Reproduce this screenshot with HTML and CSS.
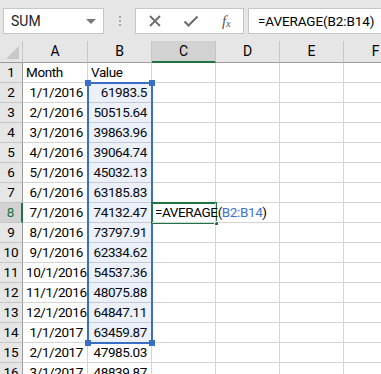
FILE: index.html
```html
<!DOCTYPE html>
<html lang="en">
<head>
    <meta charset="UTF-8">
    <title>Sheet</title>
    <link rel="stylesheet" href="styles.css">
</head>
<body>
    <div class="toolbar">
        <div class="name-box">
            <span>SUM</span>
            <span class="caret"></span>
        </div>
        <div class="grip"><i></i><i></i><i></i></div>
        <div class="buttons">
            <svg width="14" height="14" viewBox="0 0 14 14"><path d="M2 2 L12 12 M12 2 L2 12" stroke="#6b6b6b" stroke-width="1.8" fill="none"/></svg>
            <svg width="16" height="14" viewBox="0 0 16 14"><path d="M1.5 7.5 L5.5 11.5 L14.5 2.5" stroke="#6b6b6b" stroke-width="2" fill="none"/></svg>
            <span class="fx"><i>f</i><sub>x</sub></span>
        </div>
        <div class="formula">=AVERAGE(B2:B14)</div>
    </div>

    <div class="sheet">
        <div class="grid">
            <div class="corner"><span class="tri"></span></div>
            <div class="colhead">A</div>
            <div class="colhead">B</div>
            <div class="colhead active">C</div>
            <div class="colhead">D</div>
            <div class="colhead">E</div>
            <div class="colhead">F</div>

            <div class="rowhead">1</div><div class="cell">Month</div><div class="cell">Value</div><div class="cell"></div><div class="cell"></div><div class="cell"></div><div class="cell"></div>
            <div class="rowhead">2</div><div class="cell num">1/1/2016</div><div class="cell num">61983.5</div><div class="cell"></div><div class="cell"></div><div class="cell"></div><div class="cell"></div>
            <div class="rowhead">3</div><div class="cell num">2/1/2016</div><div class="cell num">50515.64</div><div class="cell"></div><div class="cell"></div><div class="cell"></div><div class="cell"></div>
            <div class="rowhead">4</div><div class="cell num">3/1/2016</div><div class="cell num">39863.96</div><div class="cell"></div><div class="cell"></div><div class="cell"></div><div class="cell"></div>
            <div class="rowhead">5</div><div class="cell num">4/1/2016</div><div class="cell num">39064.74</div><div class="cell"></div><div class="cell"></div><div class="cell"></div><div class="cell"></div>
            <div class="rowhead">6</div><div class="cell num">5/1/2016</div><div class="cell num">45032.13</div><div class="cell"></div><div class="cell"></div><div class="cell"></div><div class="cell"></div>
            <div class="rowhead">7</div><div class="cell num">6/1/2016</div><div class="cell num">63185.83</div><div class="cell"></div><div class="cell"></div><div class="cell"></div><div class="cell"></div>
            <div class="rowhead active">8</div><div class="cell num">7/1/2016</div><div class="cell num">74132.47</div><div class="cell edit">=AVERAGE(<span class="ref">B2:B14</span>)</div><div class="cell"></div><div class="cell"></div><div class="cell"></div>
            <div class="rowhead">9</div><div class="cell num">8/1/2016</div><div class="cell num">73797.91</div><div class="cell"></div><div class="cell"></div><div class="cell"></div><div class="cell"></div>
            <div class="rowhead">10</div><div class="cell num">9/1/2016</div><div class="cell num">62334.62</div><div class="cell"></div><div class="cell"></div><div class="cell"></div><div class="cell"></div>
            <div class="rowhead">11</div><div class="cell num">10/1/2016</div><div class="cell num">54537.36</div><div class="cell"></div><div class="cell"></div><div class="cell"></div><div class="cell"></div>
            <div class="rowhead">12</div><div class="cell num">11/1/2016</div><div class="cell num">48075.88</div><div class="cell"></div><div class="cell"></div><div class="cell"></div><div class="cell"></div>
            <div class="rowhead">13</div><div class="cell num">12/1/2016</div><div class="cell num">64847.11</div><div class="cell"></div><div class="cell"></div><div class="cell"></div><div class="cell"></div>
            <div class="rowhead">14</div><div class="cell num">1/1/2017</div><div class="cell num">63459.87</div><div class="cell"></div><div class="cell"></div><div class="cell"></div><div class="cell"></div>
            <div class="rowhead">15</div><div class="cell num">2/1/2017</div><div class="cell num">47985.03</div><div class="cell"></div><div class="cell"></div><div class="cell"></div><div class="cell"></div>
            <div class="rowhead">16</div><div class="cell num">3/1/2017</div><div class="cell num">48839.87</div><div class="cell"></div><div class="cell"></div><div class="cell"></div><div class="cell"></div>
        </div>

        <!-- overlays -->
        <div class="range">
            <span class="h tl"></span><span class="h tr"></span>
            <span class="h bl"></span><span class="h br"></span>
        </div>
        <div class="active-cell"><span class="fill"></span></div>
    </div>
</body>
</html>
```

FILE: styles.css
```css
* {
    margin: 0;
    padding: 0;
    box-sizing: border-box;
}

body {
    background: #e6e6e6;
    font-family: Roboto, "Liberation Sans", sans-serif;
    font-size: 13px;
    color: #000;
    overflow: hidden;
    width: 381px;
    height: 374px;
}

.toolbar {
    height: 41px;
    display: flex;
    align-items: flex-start;
    padding-top: 8px;
    padding-left: 3px;
}

.name-box {
    width: 101px;
    height: 26px;
    background: #fff;
    border: 1px solid #c6c6c6;
    display: flex;
    align-items: center;
    justify-content: space-between;
    padding: 0 7px 0 7px;
    font-size: 14px;
    color: #222;
}

.caret {
    width: 0;
    height: 0;
    border-left: 5px solid transparent;
    border-right: 5px solid transparent;
    border-top: 5px solid #7a7a7a;
}

.grip {
    width: 31px;
    height: 26px;
    display: flex;
    flex-direction: column;
    align-items: center;
    justify-content: center;
    gap: 2px;
}

.grip i {
    width: 2px;
    height: 2px;
    background: #a8a8a8;
}

.buttons {
    width: 109px;
    height: 26px;
    background: #fff;
    border: 1px solid #c6c6c6;
    display: flex;
    align-items: center;
    padding-left: 12px;
    gap: 21px;
}

.fx {
    font-family: "Liberation Serif", serif;
    font-size: 15px;
    color: #555;
    margin-left: 2px;
}

.fx sub {
    font-size: 10px;
    font-style: italic;
    vertical-align: -1px;
}

.formula {
    flex: 1;
    height: 26px;
    margin-left: 4px;
    background: #fff;
    border: 1px solid #c6c6c6;
    border-right: none;
    padding-left: 9px;
    line-height: 24px;
    font-size: 13.5px;
    letter-spacing: -0.1px;
}

.sheet {
    position: relative;
    background: #fff;
    width: 381px;
    height: 333px;
    overflow: hidden;
}

.grid {
    display: grid;
    grid-template-columns: 23px 65px 64px 64px 64px 64px 64px;
    grid-template-rows: 22px;
    grid-auto-rows: 20px;
}

.corner {
    background: #e6e6e6;
    border-right: 1px solid #c6c6c6;
    border-bottom: 1px solid #9b9b9b;
    position: relative;
}

.tri {
    position: absolute;
    right: 3px;
    bottom: 3px;
    width: 0;
    height: 0;
    border-left: 13px solid transparent;
    border-bottom: 13px solid #c8c8c8;
}

.colhead {
    background: #e6e6e6;
    border-right: 1px solid #c6c6c6;
    border-bottom: 1px solid #9b9b9b;
    text-align: center;
    line-height: 20px;
    font-size: 14px;
}

.colhead.active {
    background: #d2d2d2;
    border-bottom: 2px solid #217346;
}

.rowhead {
    background: #e6e6e6;
    border-right: 1px solid #9b9b9b;
    border-bottom: 1px solid #c6c6c6;
    text-align: center;
    line-height: 19px;
    font-size: 13.5px;
}

.rowhead.active {
    background: #d2d2d2;
    color: #217346;
    border-right: 2px solid #217346;
}

.cell {
    border-right: 1px solid #d4d4d4;
    border-bottom: 1px solid #d4d4d4;
    line-height: 19px;
    padding: 0 4px 0 3px;
    white-space: nowrap;
    font-size: 13.5px;
    letter-spacing: -0.4px;
}

.cell.num {
    text-align: right;
}

.cell.edit {
    overflow: visible;
    position: relative;
    z-index: 2;
    padding-left: 3px;
}

.ref {
    color: #3f74c9;
}

.range {
    position: absolute;
    left: 87px;
    top: 41px;
    width: 66px;
    height: 262px;
    border: 2px solid #3a6ec5;
    background: rgba(58, 110, 197, 0.1);
}

.h {
    position: absolute;
    width: 6px;
    height: 6px;
    background: #3a6ec5;
}

.tl { left: -4px; top: -4px; }
.tr { right: -4px; top: -4px; }
.bl { left: -4px; bottom: -4px; }
.br { right: -4px; bottom: -4px; }

.active-cell {
    position: absolute;
    left: 151px;
    top: 161px;
    width: 66px;
    height: 22px;
    border: 2px solid #217346;
    z-index: 1;
}

.fill {
    position: absolute;
    right: -4px;
    bottom: -4px;
    width: 5px;
    height: 5px;
    background: #217346;
    border: 1px solid #fff;
}
```
